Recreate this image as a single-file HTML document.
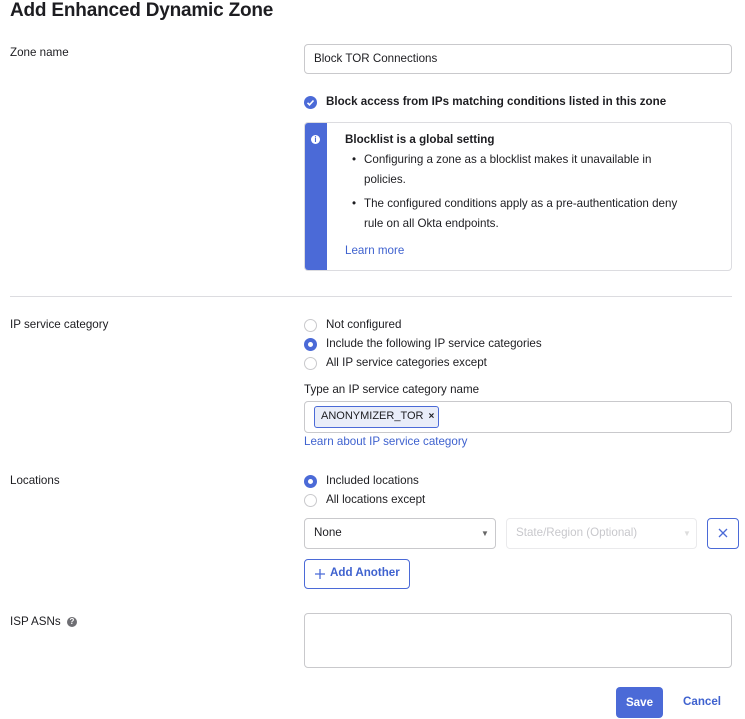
<!DOCTYPE html>
<html><head><meta charset="utf-8"><style>
*{box-sizing:border-box;margin:0;padding:0}
body{width:745px;height:719px;background:#fff;font-family:"Liberation Sans",sans-serif;font-size:11.6px;color:#1d1d21;position:relative;overflow:hidden}
.a{position:absolute;white-space:nowrap}
.box{position:absolute;border:1px solid #c9c9cc;border-radius:4px;background:#fff}
.radio{position:absolute;width:13px;height:13px;border-radius:50%;border:1px solid #c9c9cc;background:#fff}
.radio.on{border:4px solid #4b6ad7}
.link{color:#3f62cf}
</style></head><body>
<div class="a" style="left:10px;top:0px;font-size:19px;font-weight:bold;letter-spacing:-0.2px;color:#1d1d21">Add Enhanced Dynamic Zone</div>
<div class="a" style="left:10px;top:46px">Zone name</div>
<div class="box" style="left:304px;top:44px;width:428px;height:30px"></div>
<div class="a" style="left:314px;top:52px">Block TOR Connections</div>

<div class="a" style="left:304px;top:96px;width:13px;height:13px;border-radius:50%;background:#4b6ad7"><svg width="13" height="13" viewBox="0 0 13 13" style="position:absolute;left:0;top:0"><path d="M3.5 6.8l2 2 4-4.3" stroke="#fff" stroke-width="1.6" fill="none"/></svg></div>
<div class="a" style="left:326px;top:95px;font-weight:bold">Block access from IPs matching conditions listed in this zone</div>

<div class="box" style="left:304px;top:122px;width:428px;height:149px;border-color:#dcdce0;overflow:hidden">
<div style="position:absolute;left:0;top:0;width:22px;height:100%;background:#4b6ad7"></div>
<div style="position:absolute;left:6px;top:12px;width:9px;height:9px;border-radius:50%;background:#fff;color:#4b6ad7;font-size:8px;font-weight:bold;text-align:center;line-height:9px">i</div>
</div>
<div class="a" style="left:345px;top:133px;font-weight:bold">Blocklist is a global setting</div>
<div class="a" style="left:352px;top:153px">•</div>
<div class="a" style="left:364px;top:153px">Configuring a zone as a blocklist makes it unavailable in</div>
<div class="a" style="left:364px;top:173px">policies.</div>
<div class="a" style="left:352px;top:197px">•</div>
<div class="a" style="left:364px;top:197px">The configured conditions apply as a pre-authentication deny</div>
<div class="a" style="left:364px;top:217px">rule on all Okta endpoints.</div>
<div class="a link" style="left:345px;top:244px">Learn more</div>

<div class="a" style="left:10px;top:296px;width:722px;height:1px;background:#dcdce0"></div>

<div class="a" style="left:10px;top:318px">IP service category</div>
<div class="radio" style="left:304px;top:319px"></div><div class="a" style="left:326px;top:318px">Not configured</div>
<div class="radio on" style="left:304px;top:338px"></div><div class="a" style="left:326px;top:337px">Include the following IP service categories</div>
<div class="radio" style="left:304px;top:357px"></div><div class="a" style="left:326px;top:356px">All IP service categories except</div>
<div class="a" style="left:304px;top:383px">Type an IP service category name</div>
<div class="box" style="left:304px;top:401px;width:428px;height:32px"></div>
<div class="a" style="left:314px;top:406px;width:125px;height:22px;border:1px solid #4b6ad7;border-radius:3px;background:#e9edf9;padding:3px 0 0 6px;font-size:11px">ANONYMIZER_TOR <b style="font-size:10px;margin-left:2px">×</b></div>
<div class="a link" style="left:304px;top:435px">Learn about IP service category</div>

<div class="a" style="left:10px;top:474px">Locations</div>
<div class="radio on" style="left:304px;top:475px"></div><div class="a" style="left:326px;top:474px">Included locations</div>
<div class="radio" style="left:304px;top:494px"></div><div class="a" style="left:326px;top:493px">All locations except</div>

<div class="box" style="left:304px;top:518px;width:192px;height:31px"></div>
<div class="a" style="left:314px;top:526px">None</div>
<div class="a" style="left:481px;top:529px;font-size:8px;color:#666">▼</div>
<div class="box" style="left:506px;top:518px;width:191px;height:31px;border-color:#eaeaec"></div>
<div class="a" style="left:516px;top:526px;color:#c8c8cc">State/Region (Optional)</div>
<div class="a" style="left:683px;top:529px;font-size:8px;color:#ddd">▼</div>
<div class="box" style="left:707px;top:518px;width:32px;height:31px;border-color:#4b6ad7"></div>
<svg class="a" style="left:718px;top:528px" width="10" height="10" viewBox="0 0 10 10"><path d="M1 1l8 8M9 1l-8 8" stroke="#4b6ad7" stroke-width="1.3"/></svg>

<div class="box" style="left:304px;top:559px;width:106px;height:30px;border-color:#4b6ad7"></div>
<svg class="a" style="left:315px;top:569px" width="10" height="10" viewBox="0 0 10 10"><path d="M5 0v10M0 5h10" stroke="#4b6ad7" stroke-width="1.3"/></svg>
<div class="a" style="left:330px;top:566px;color:#3f62cf;font-weight:bold">Add Another</div>

<div class="a" style="left:10px;top:615px">ISP ASNs</div>
<div class="a" style="left:67px;top:617px;width:10px;height:10px;border-radius:50%;background:#6e6e73;color:#fff;font-size:8px;font-weight:bold;text-align:center;line-height:10px">?</div>
<div class="box" style="left:304px;top:613px;width:428px;height:55px"></div>

<div class="a" style="left:616px;top:687px;width:47px;height:31px;border-radius:4px;background:#4b6ad7;color:#fff;font-weight:bold;text-align:center;line-height:31px">Save</div>
<div class="a link" style="left:683px;top:695px;font-weight:bold">Cancel</div>
</body></html>
